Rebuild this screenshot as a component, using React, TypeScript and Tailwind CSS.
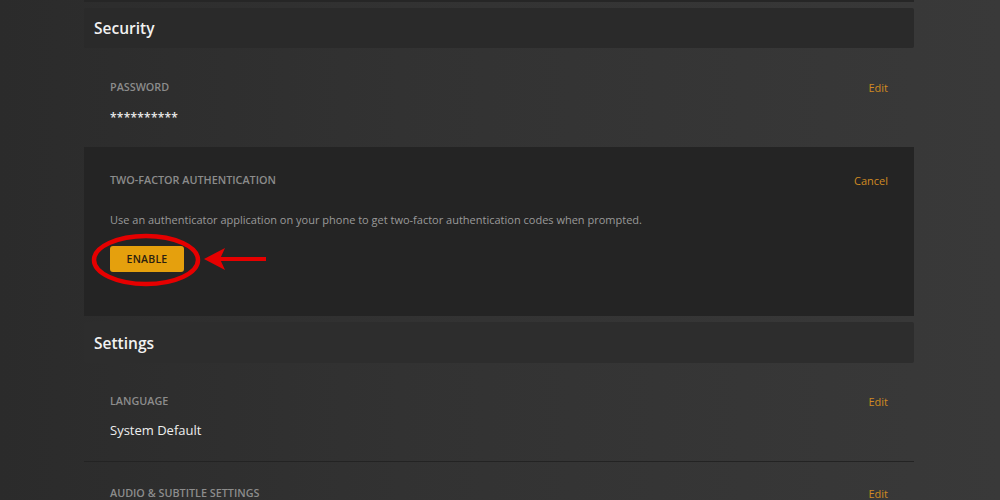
import React from "react";

const label = "text-[10.8px] font-semibold uppercase text-[#8c8c8c] leading-none";
const edit = "text-[11px] text-[#d08a22] leading-none";

export default function App() {
  return (
    <div
      className="w-[1000px] h-[500px] overflow-hidden bg-[linear-gradient(90deg,#2b2b2b_0%,#323232_40%,#393939_100%)]"
      style={{ fontFamily: '"Open Sans", "Noto Sans", sans-serif' }}
    >
      <div className="ml-[84px] w-[830px] flex flex-col">
        <div className="h-[2px] bg-[#262626]" />
        <div className="h-[6px]" />
        <div className="h-[40px] bg-[#2a2a2a] rounded-[2px] flex items-center px-[10px]">
          <span className="text-[15.5px] font-semibold text-[#f2f2f2] mt-[2px]">Security</span>
        </div>
        <div className="h-[99px] flex flex-col px-[26px] pt-[34px]">
          <div className="flex justify-between items-center">
            <span className={label}>Password</span>
            <span className={edit}>Edit</span>
          </div>
          <div className="mt-[19px] text-[12px] font-semibold text-[#eeeeee] leading-none tracking-[0.02em]">**********</div>
        </div>
        <div className="h-[169px] bg-[#242424] flex flex-col px-[26px] pt-[28px]">
          <div className="flex justify-between items-center">
            <span className={label}>Two-Factor Authentication</span>
            <span className={edit}>Cancel</span>
          </div>
          <div className="mt-[28px] text-[11px] text-[#9a9a9a] leading-none">
            Use an authenticator application on your phone to get two-factor authentication codes when prompted.
          </div>
          <div className="relative mt-[21px] w-[74px] h-[26px]">
            <button className="w-[74px] h-[26px] rounded-[3px] bg-[#e5a00d] text-[10.5px] font-semibold text-[#2a2010] tracking-[0.02em] flex items-center justify-center leading-none">
              ENABLE
            </button>
            <svg
              className="absolute left-[-20px] top-[-12px] overflow-visible"
              width="180"
              height="52"
              viewBox="0 0 180 52"
            >
              <ellipse cx="56" cy="26" rx="52" ry="24" fill="none" stroke="#e60000" strokeWidth="4.5" />
              <line x1="128" y1="25" x2="176" y2="25" stroke="#e60000" strokeWidth="4" />
              <polygon points="114,25 135,14 130,25 135,36" fill="#e60000" />
            </svg>
          </div>
        </div>
        <div className="h-[6px]" />
        <div className="h-[41px] bg-[#2d2d2d] rounded-[2px] flex items-center px-[10px]">
          <span className="text-[15.5px] font-semibold text-[#f2f2f2] mt-[2px]">Settings</span>
        </div>
        <div className="h-[99px] border-b border-[#232323] flex flex-col px-[26px] pt-[33px]">
          <div className="flex justify-between items-center">
            <span className={label}>Language</span>
            <span className={edit}>Edit</span>
          </div>
          <div className="mt-[17px] text-[13px] text-[#eeeeee] leading-none">System Default</div>
        </div>
        <div className="flex flex-col px-[26px] pt-[26px]">
          <div className="flex justify-between items-center">
            <span className={label}>Audio &amp; Subtitle Settings</span>
            <span className={edit}>Edit</span>
          </div>
        </div>
      </div>
    </div>
  );
}
